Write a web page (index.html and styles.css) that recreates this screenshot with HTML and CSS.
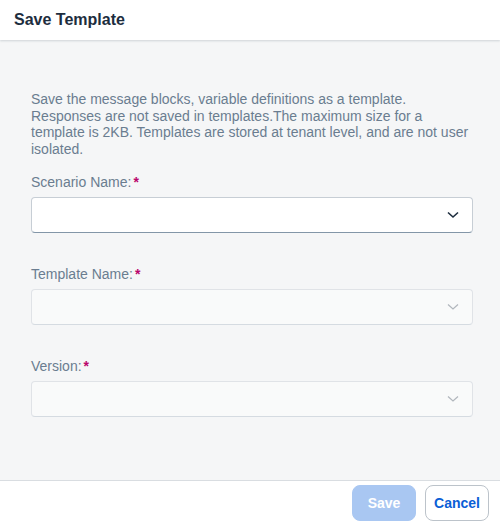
FILE: index.html
```html
<!DOCTYPE html>
<html>
<head>
<meta charset="utf-8">
<link rel="stylesheet" href="styles.css">
</head>
<body>
<div class="dialog">
  <header class="header">
    <h1 class="title">Save Template</h1>
  </header>
  <main class="content">
    <p class="desc">Save the message blocks, variable definitions as a template. Responses are not saved in templates.The maximum size for a template is 2KB. Templates are stored at tenant level, and are not user isolated.</p>
    <div class="field">
      <label class="label">Scenario Name:<span class="req">*</span></label>
      <div class="select">
        <svg class="chev" width="12" height="8" viewBox="0 0 12 8"><path d="M1 1.5 L6 6 L11 1.5" fill="none" stroke="#1d2d3e" stroke-width="1.6"/></svg>
      </div>
    </div>
    <div class="field">
      <label class="label">Template Name:<span class="req">*</span></label>
      <div class="select disabled">
        <svg class="chev" width="12" height="8" viewBox="0 0 12 8"><path d="M1 1.5 L6 6 L11 1.5" fill="none" stroke="#1d2d3e" stroke-width="1.2"/></svg>
      </div>
    </div>
    <div class="field">
      <label class="label">Version:<span class="req">*</span></label>
      <div class="select disabled">
        <svg class="chev" width="12" height="8" viewBox="0 0 12 8"><path d="M1 1.5 L6 6 L11 1.5" fill="none" stroke="#1d2d3e" stroke-width="1.2"/></svg>
      </div>
    </div>
  </main>
  <footer class="footer">
    <button class="btn primary">Save</button>
    <button class="btn secondary">Cancel</button>
  </footer>
</div>
</body>
</html>
```
FILE: styles.css
```css
html, body {
  margin: 0;
  padding: 0;
  width: 500px;
  height: 523px;
  overflow: hidden;
  font-family: "Liberation Sans", Arial, sans-serif;
  background: #fff;
}
.dialog {
  display: flex;
  flex-direction: column;
  height: 523px;
}
.header {
  height: 40px;
  background: #fff;
  box-shadow: 0 1px 2px rgba(34, 53, 72, 0.18);
  display: flex;
  align-items: center;
  padding-left: 14px;
  position: relative;
  z-index: 1;
  flex-shrink: 0;
}
.title {
  margin: 0;
  font-size: 16px;
  font-weight: bold;
  color: #1d2d3e;
}
.content {
  flex: 1;
  background: #f5f6f7;
  padding: 51px 27px 0 31px;
  border-bottom: 1px solid #d9dde1;
}
.desc {
  margin: 0 0 17px;
  font-size: 14px;
  line-height: 16.6px;
  color: #6a7d90;
}
.field {
  margin-bottom: 33px;
}
.label {
  display: block;
  font-size: 14px;
  line-height: 17px;
  color: #6a7d90;
  margin-bottom: 6px;
}
.req {
  color: #ba066c;
  font-weight: bold;
  margin-left: 2px;
}
.select {
  height: 36px;
  box-sizing: border-box;
  background: #fff;
  border: 1px solid #c7ced5;
  border-bottom-color: #8396a8;
  border-radius: 4px;
  display: flex;
  align-items: center;
  justify-content: flex-end;
  padding-right: 13px;
}
.select.disabled {
  opacity: 0.45;
  border-bottom-color: #b0bcc7;
}
.select.disabled .chev {
  opacity: 0.7;
}
.footer {
  height: 42px;
  box-sizing: border-box;
  background: #fff;
  display: flex;
  justify-content: flex-end;
  align-items: flex-start;
  gap: 9px;
  padding: 4px 11px 0 0;
  flex-shrink: 0;
}
.btn {
  width: 64px;
  height: 36px;
  border-radius: 8px;
  font-family: "Liberation Sans", Arial, sans-serif;
  font-size: 14px;
  font-weight: bold;
  padding: 0;
}
.primary {
  background: #a9c7f2;
  border: 1px solid #a9c7f2;
  color: #fff;
}
.secondary {
  background: #fff;
  border: 1px solid #bcc3ca;
  color: #0a5ed6;
}
```
